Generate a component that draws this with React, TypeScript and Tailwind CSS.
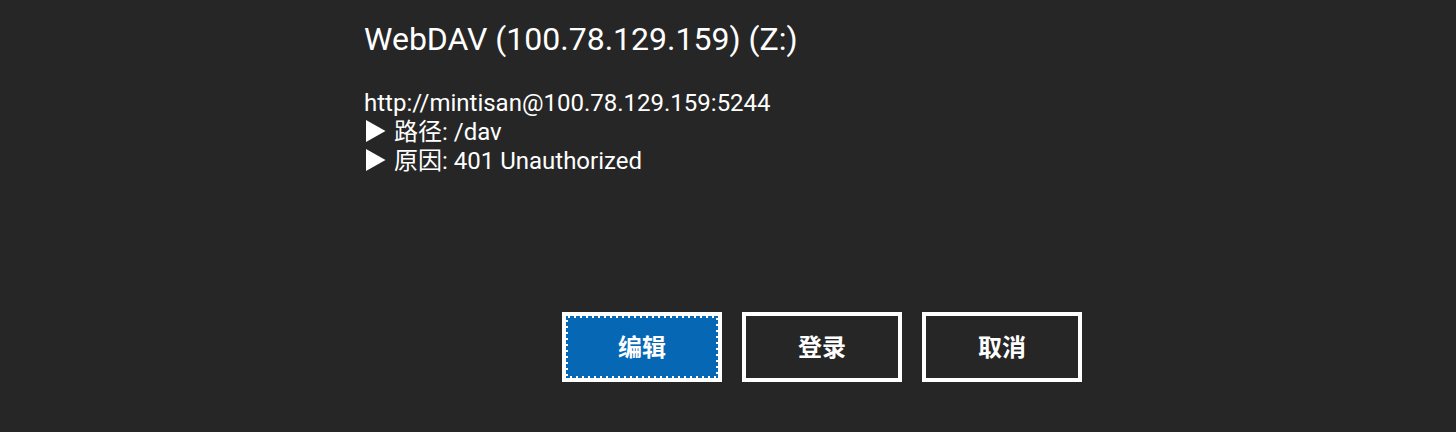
const rows = [
  { label: "路径", value: "/dav" },
  { label: "原因", value: "401 Unauthorized" },
];

function Marker() {
  return (
    <svg aria-hidden="true" viewBox="0 0 20 22" className="mb-1 h-[22px] w-5 shrink-0 fill-white">
      <path d="M0 0L19.5 11L0 22Z" />
    </svg>
  );
}

function FocusDots() {
  return (
    <svg
      aria-hidden="true"
      viewBox="0 0 152 62"
      shapeRendering="crispEdges"
      className="absolute inset-0 h-full w-full fill-none stroke-white stroke-2"
    >
      <path d="M2 1H152M151 2V62M4 61H152M1 4V62" strokeDasharray="2 4" />
    </svg>
  );
}

export default function App() {
  const button =
    "h-[70px] w-40 border-4 border-white pt-0.5 text-2xl font-bold text-white";
  return (
    <main className="min-h-screen bg-[#262626] px-4 pb-[50px] font-['Roboto','Noto_Sans_CJK_SC',sans-serif] text-white">
      <div className="mx-auto w-full max-w-[728px]">
        <h1 className="pt-5 text-[32px] leading-[38px]">WebDAV (100.78.129.159) (Z:)</h1>
        <div className="mt-[31px] text-2xl leading-[29px]">
          <p>http://mintisan@100.78.129.159:5244</p>
          {rows.map((row) => (
            <p key={row.label} className="flex items-center gap-2 pl-0.5">
              <Marker />
              <span>
                {row.label}: {row.value}
              </span>
            </p>
          ))}
        </div>
        <div className="mt-[136px] flex justify-end gap-5 pr-2.5">
          <button type="button" className={`${button} relative bg-[#0667b5]`}>
            编辑
            <FocusDots />
          </button>
          <button type="button" className={button}>登录</button>
          <button type="button" className={button}>取消</button>
        </div>
      </div>
    </main>
  );
}
